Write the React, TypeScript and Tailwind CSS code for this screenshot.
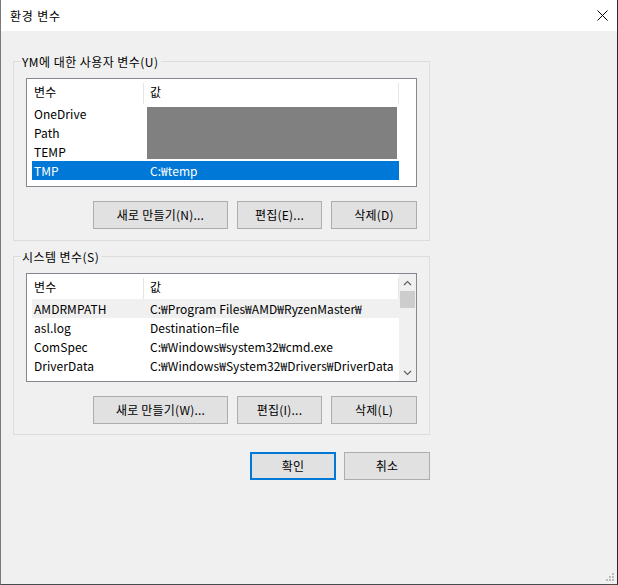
import React from 'react';

type EnvVar = { name: string; value: string };

const userVars: EnvVar[] = [
  { name: 'OneDrive', value: '' },
  { name: 'Path', value: '' },
  { name: 'TEMP', value: '' },
  { name: 'TMP', value: 'C:₩temp' },
];

const systemVars: EnvVar[] = [
  { name: 'AMDRMPATH', value: 'C:₩Program Files₩AMD₩RyzenMaster₩' },
  { name: 'asl.log', value: 'Destination=file' },
  { name: 'ComSpec', value: 'C:₩Windows₩system32₩cmd.exe' },
  { name: 'DriverData', value: 'C:₩Windows₩System32₩Drivers₩DriverData' },
];

function WinButton({ label, width, primary }: { label: string; width: string; primary?: boolean }) {
  return (
    <button
      className={`${width} h-[28px] bg-[#e1e1e1] text-black flex items-center justify-center ${
        primary ? 'border-2 border-[#0078d7]' : 'border border-[#adadad]'
      }`}
    >
      {label}
    </button>
  );
}

function ListHeader() {
  return (
    <div className="flex h-[25px] shrink-0 bg-white">
      <div className="flex w-[116px] items-center pl-[7px]">변수</div>
      <div className="mt-[4px] w-px bg-[#e5e5e5]" />
      <div className="flex w-[254px] items-center pl-[6px]">값</div>
      <div className="mt-[4px] w-px bg-[#e5e5e5]" />
    </div>
  );
}

function ListRow({ row, state }: { row: EnvVar; state?: 'selected' | 'hover' }) {
  const tone =
    state === 'selected'
      ? 'bg-[#0078d7] text-white'
      : state === 'hover'
        ? 'bg-[#f0f0f0] text-black'
        : 'text-black';
  return (
    <div className={`ml-[5px] flex h-[19px] w-[367px] items-center tracking-[0.05px] ${tone}`}>
      <span className="w-[111px] shrink-0 pl-[2px] whitespace-nowrap">{row.name}</span>
      <span className="min-w-0 flex-1 overflow-hidden pl-[7px] whitespace-nowrap">{row.value}</span>
    </div>
  );
}

function GroupBox({ legend, height, children }: { legend: string; height: string; children: React.ReactNode }) {
  return (
    <div className={`relative w-[417px] ${height} border border-[#dcdcdc] px-[12px] pt-[16px]`}>
      {/* caption sits on the top border */}
      <span className="absolute left-[7px] top-[-9px] bg-[#f0f0f0] px-[1px] pr-[3px] leading-[17px] tracking-[0.45px] whitespace-nowrap">
        {legend}
      </span>
      {children}
    </div>
  );
}

function ScrollBar() {
  return (
    <div className="flex w-[17px] flex-col items-center bg-[#f0f0f0]">
      <div className="flex h-[17px] w-full items-center justify-center">
        <svg width="9" height="6" viewBox="0 0 9 6">
          <path d="M1 5 L4.5 1.5 L8 5" fill="none" stroke="#606060" strokeWidth="1.2" />
        </svg>
      </div>
      <div className="h-[17px] w-[15px] bg-[#cdcdcd]" />
      <div className="flex-1" />
      <div className="flex h-[17px] w-full items-center justify-center">
        <svg width="9" height="6" viewBox="0 0 9 6">
          <path d="M1 1 L4.5 4.5 L8 1" fill="none" stroke="#606060" strokeWidth="1.2" />
        </svg>
      </div>
    </div>
  );
}

export default function App() {
  return (
    <div
      className="relative flex h-[585px] w-[618px] flex-col border-b border-l border-r border-b-[#4a4a4a] border-l-[#7a7a7a] border-r-[#2b2b2b] bg-[#f0f0f0] text-[12px] tracking-[0.22px] text-black"
      style={{ fontFamily: '"Noto Sans CJK KR", "Noto Sans", sans-serif' }}
    >
      {/* Title bar */}
      <div className="flex h-[31px] shrink-0 items-center justify-between bg-white pl-[9px] pr-[9px]">
        <span className="tracking-[0.8px]">환경 변수</span>
        <svg width="11" height="11" viewBox="0 0 11 11">
          <path d="M0.5 0.5 L10.5 10.5 M10.5 0.5 L0.5 10.5" stroke="#000" strokeWidth="1" />
        </svg>
      </div>

      <div className="flex flex-col pl-[12px]">
        {/* User variables */}
        <div className="mt-[30px]">
          <GroupBox legend="YM에 대한 사용자 변수(U)" height="h-[180px]">
            <div className="relative flex h-[109px] w-full flex-col border border-[#828790] bg-white">
              <ListHeader />
              {userVars.map((r, i) => (
                <ListRow key={r.name} row={r} state={i === 3 ? 'selected' : undefined} />
              ))}
              {/* redacted values */}
              <div className="absolute left-[120px] top-[28px] h-[52px] w-[250px] bg-[#808080]" />
            </div>
            <div className="mt-[14px] flex justify-end gap-[9px]">
              <WinButton label="새로 만들기(N)..." width="w-[135px]" />
              <WinButton label="편집(E)..." width="w-[85px]" />
              <WinButton label="삭제(D)" width="w-[86px]" />
            </div>
          </GroupBox>
        </div>

        {/* System variables */}
        <div className="mt-[15px]">
          <GroupBox legend="시스템 변수(S)" height="h-[179px]">
            <div className="flex h-[109px] w-full border border-[#828790] bg-white">
              <div className="flex w-[372px] flex-col">
                <ListHeader />
                {systemVars.map((r, i) => (
                  <ListRow key={r.name} row={r} state={i === 0 ? 'hover' : undefined} />
                ))}
              </div>
              <div className="flex-1" />
              <ScrollBar />
            </div>
            <div className="mt-[14px] flex justify-end gap-[9px]">
              <WinButton label="새로 만들기(W)..." width="w-[135px]" />
              <WinButton label="편집(I)..." width="w-[85px]" />
              <WinButton label="삭제(L)" width="w-[86px]" />
            </div>
          </GroupBox>
        </div>

        {/* Dialog buttons */}
        <div className="mt-[17px] flex w-[417px] justify-end gap-[8px]">
          <WinButton label="확인" width="w-[86px]" primary />
          <WinButton label="취소" width="w-[86px]" />
        </div>
      </div>

      {/* size grip */}
      <svg className="absolute bottom-[2px] right-[2px]" width="9" height="9" viewBox="0 0 9 9">
        <rect x="6" y="0" width="2" height="2" fill="#bcbcbc" />
        <rect x="3" y="3" width="2" height="2" fill="#bcbcbc" />
        <rect x="6" y="3" width="2" height="2" fill="#bcbcbc" />
        <rect x="0" y="6" width="2" height="2" fill="#bcbcbc" />
        <rect x="3" y="6" width="2" height="2" fill="#bcbcbc" />
        <rect x="6" y="6" width="2" height="2" fill="#bcbcbc" />
      </svg>
    </div>
  );
}
